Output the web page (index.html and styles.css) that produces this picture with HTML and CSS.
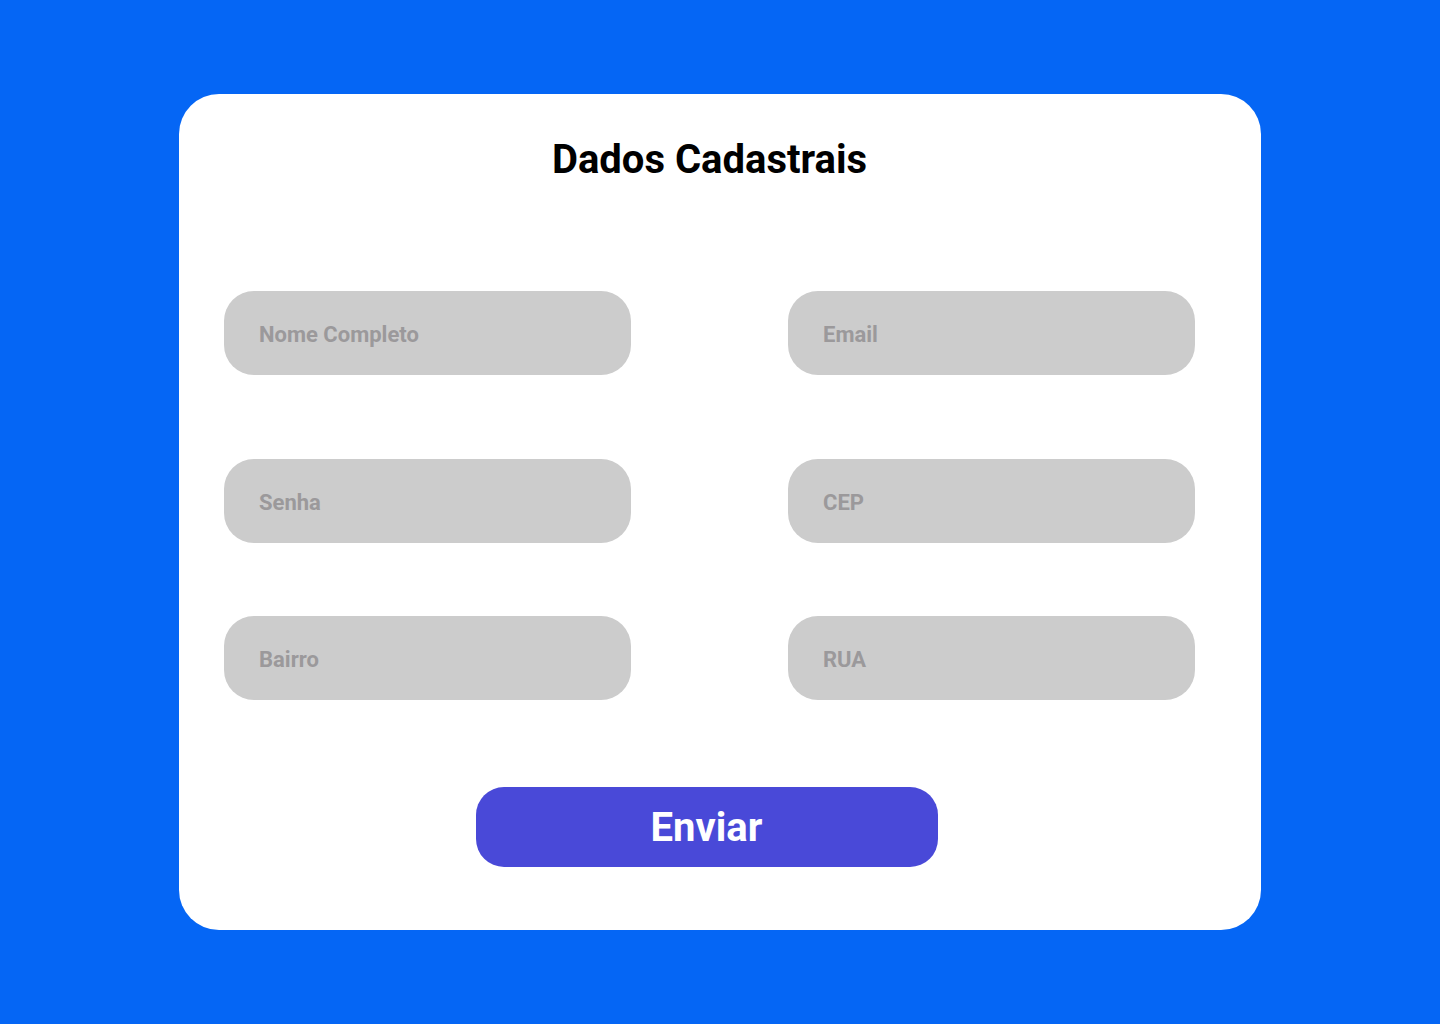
FILE: index.html
```html
<!DOCTYPE html>
<html lang="pt-BR">
<head>
<meta charset="utf-8">
<title>Dados Cadastrais</title>
<link rel="stylesheet" href="styles.css">
</head>
<body>
<main class="card">
  <h1 class="title">Dados Cadastrais</h1>
  <form class="form">
    <div class="row">
      <input class="field" type="text" placeholder="Nome Completo">
      <input class="field" type="email" placeholder="Email">
    </div>
    <div class="row row-2">
      <input class="field" type="password" placeholder="Senha">
      <input class="field" type="text" placeholder="CEP">
    </div>
    <div class="row row-3">
      <input class="field" type="text" placeholder="Bairro">
      <input class="field" type="text" placeholder="RUA">
    </div>
    <button class="submit" type="button">Enviar</button>
  </form>
</main>
</body>
</html>
```
FILE: styles.css
```css
* { box-sizing: border-box; }
html, body { margin: 0; padding: 0; }
body {
  background: #0566f5;
  font-family: Roboto, "Liberation Sans", sans-serif;
  min-height: 1024px;
  overflow: hidden;
}
.card {
  width: 1082px;
  height: 836px;
  margin: 94px auto 0;
  background: #ffffff;
  border-radius: 40px;
  padding: 44px 66px 63px 45px;
  display: flex;
  flex-direction: column;
}
.title {
  margin: 0;
  font-size: 40px;
  line-height: 42px;
  font-weight: 700;
  color: #000;
  text-align: center;
  position: relative;
  top: 1px;
}
.form {
  margin-top: 111px;
  display: flex;
  flex-direction: column;
  align-items: center;
}
.row {
  width: 100%;
  display: grid;
  grid-template-columns: 407px 407px;
  column-gap: 157px;
}
.row-2 { margin-top: 84px; }
.row-3 { margin-top: 73px; }
.field {
  height: 84px;
  border: none;
  outline: none;
  background: #cccccc;
  border-radius: 30px;
  padding: 2px 0 0 35px;
  font-family: inherit;
  font-size: 22px;
  font-weight: 700;
  color: #555;
}
.field::placeholder {
  color: #9b999b;
  opacity: 1;
}
.submit {
  margin-top: 87px;
  width: 462px;
  height: 80px;
  border: none;
  border-radius: 28px;
  background: #4949d8;
  color: #ffffff;
  font-family: inherit;
  font-size: 40px;
  font-weight: 700;
  cursor: pointer;
  position: relative;
  left: -3px;
}
```
